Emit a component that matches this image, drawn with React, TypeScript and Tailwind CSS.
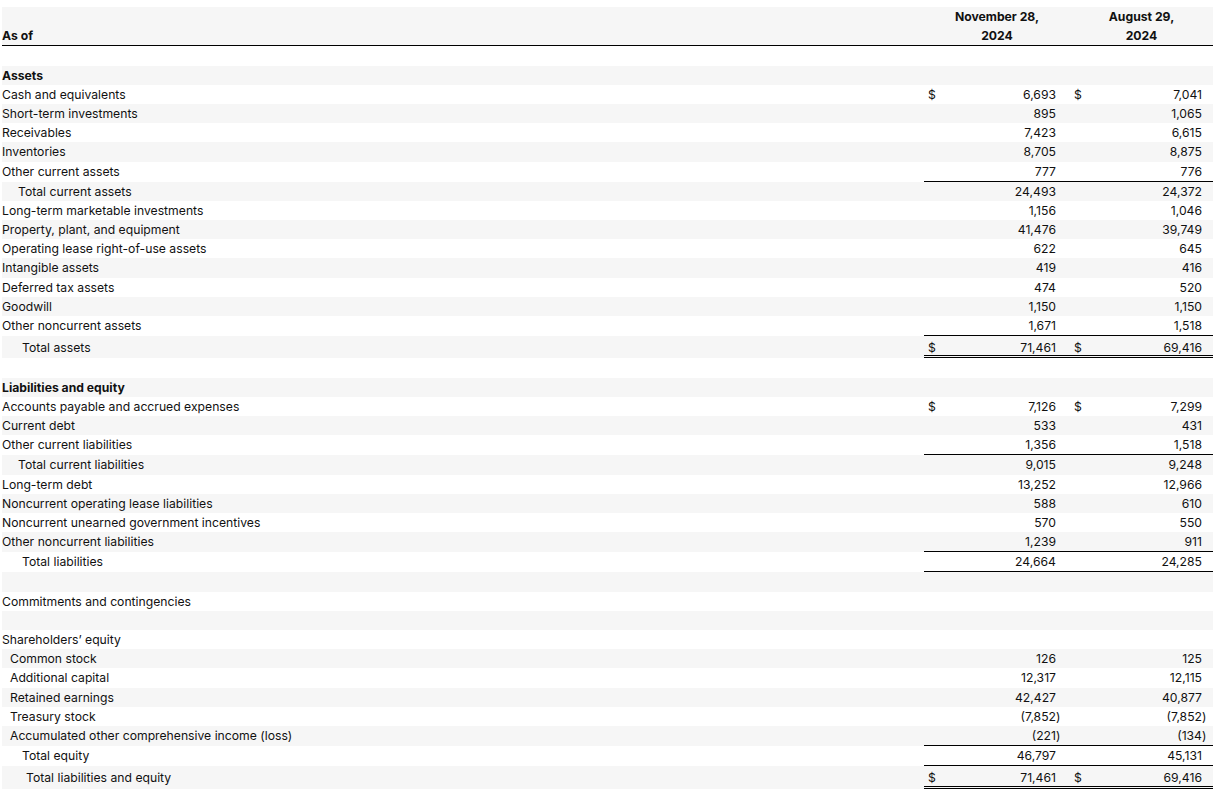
import React from "react";

type Row = {
  label: string;
  indent?: string;
  bold?: boolean;
  v1?: string;
  v2?: string;
  dollar?: boolean;
  border?: "single" | "double";
};

const rows: Row[] = [
  { label: "" },
  { label: "Assets", bold: true },
  { label: "Cash and equivalents", v1: "6,693", v2: "7,041", dollar: true },
  { label: "Short-term investments", v1: "895", v2: "1,065" },
  { label: "Receivables", v1: "7,423", v2: "6,615" },
  { label: "Inventories", v1: "8,705", v2: "8,875" },
  { label: "Other current assets", v1: "777", v2: "776", border: "single" },
  { label: "Total current assets", indent: "pl-[16px]", v1: "24,493", v2: "24,372" },
  { label: "Long-term marketable investments", v1: "1,156", v2: "1,046" },
  { label: "Property, plant, and equipment", v1: "41,476", v2: "39,749" },
  { label: "Operating lease right-of-use assets", v1: "622", v2: "645" },
  { label: "Intangible assets", v1: "419", v2: "416" },
  { label: "Deferred tax assets", v1: "474", v2: "520" },
  { label: "Goodwill", v1: "1,150", v2: "1,150" },
  { label: "Other noncurrent assets", v1: "1,671", v2: "1,518", border: "single" },
  { label: "Total assets", indent: "pl-[20px]", v1: "71,461", v2: "69,416", dollar: true, border: "double" },
  { label: "" },
  { label: "Liabilities and equity", bold: true },
  { label: "Accounts payable and accrued expenses", v1: "7,126", v2: "7,299", dollar: true },
  { label: "Current debt", v1: "533", v2: "431" },
  { label: "Other current liabilities", v1: "1,356", v2: "1,518", border: "single" },
  { label: "Total current liabilities", indent: "pl-[16px]", v1: "9,015", v2: "9,248" },
  { label: "Long-term debt", v1: "13,252", v2: "12,966" },
  { label: "Noncurrent operating lease liabilities", v1: "588", v2: "610" },
  { label: "Noncurrent unearned government incentives", v1: "570", v2: "550" },
  { label: "Other noncurrent liabilities", v1: "1,239", v2: "911", border: "single" },
  { label: "Total liabilities", indent: "pl-[20px]", v1: "24,664", v2: "24,285", border: "single" },
  { label: "" },
  { label: "Commitments and contingencies" },
  { label: "" },
  { label: "Shareholders\u2019 equity" },
  { label: "Common stock", indent: "pl-[8px]", v1: "126", v2: "125" },
  { label: "Additional capital", indent: "pl-[8px]", v1: "12,317", v2: "12,115" },
  { label: "Retained earnings", indent: "pl-[8px]", v1: "42,427", v2: "40,877" },
  { label: "Treasury stock", indent: "pl-[8px]", v1: "(7,852)", v2: "(7,852)" },
  { label: "Accumulated other comprehensive income (loss)", indent: "pl-[8px]", v1: "(221)", v2: "(134)", border: "single" },
  { label: "Total equity", indent: "pl-[20px]", v1: "46,797", v2: "45,131", border: "single" },
  { label: "Total liabilities and equity", indent: "pl-[24px]", v1: "71,461", v2: "69,416", dollar: true, border: "double" },
];

function split(v?: string): [string, string] {
  if (!v) return ["", ""];
  if (v.endsWith(")")) return [v.slice(0, -1), ")"];
  return [v, ""];
}

function borderClass(b?: "single" | "double") {
  if (b === "single") return "border-b border-black";
  if (b === "double") return "border-b-[3px] border-double border-black";
  return "";
}

function Group({ v, dollar, border, wide }: { v?: string; dollar?: boolean; border?: "single" | "double"; wide: boolean }) {
  const [num, paren] = split(v);
  const pad = border === "double" ? "pt-[1.5px]" : "";
  return (
    <div className={`flex ${wide ? "w-[146px]" : "w-[143px]"} ${borderClass(border)}`}>
      <div className={`w-[20px] h-[19.2px] pl-[4px] ${pad}`}>{dollar ? "$" : ""}</div>
      <div className={`flex-1 h-[19.2px] text-right ${pad}`}>{num}</div>
      <div className={`h-[19.2px] ${wide ? "w-[14px]" : "w-[11px]"} ${pad}`}>{paren}</div>
    </div>
  );
}

export default function App() {
  return (
    <div
      className="bg-white pt-[7px] pl-[2px] text-[12.2px] leading-[19.2px] text-[#111]"
      style={{ fontFamily: "Inter, 'Liberation Sans', sans-serif", width: 1223, height: 793 }}
    >
      <div className="w-[1211px]">
        <div className="flex bg-[#f6f6f6] border-b border-black font-bold">
          <div className="w-[922px] flex items-end">As of</div>
          <div className="w-[146px] text-center">
            <div>November 28,</div>
            <div>2024</div>
          </div>
          <div className="w-[143px] text-center">
            <div>August 29,</div>
            <div>2024</div>
          </div>
        </div>
        {rows.map((r, i) => (
          <div key={i} className={`flex ${i % 2 === 1 ? "bg-[#f6f6f6]" : "bg-white"}`}>
            <div
              className={`w-[922px] h-[19.2px] ${r.indent ?? ""} ${r.bold ? "font-bold" : ""} ${
                r.border === "double" ? "pt-[1.5px]" : ""
              }`}
            >
              {r.label}
            </div>
            <Group v={r.v1} dollar={r.dollar} border={r.border} wide />
            <Group v={r.v2} dollar={r.dollar} border={r.border} wide={false} />
          </div>
        ))}
      </div>
    </div>
  );
}
